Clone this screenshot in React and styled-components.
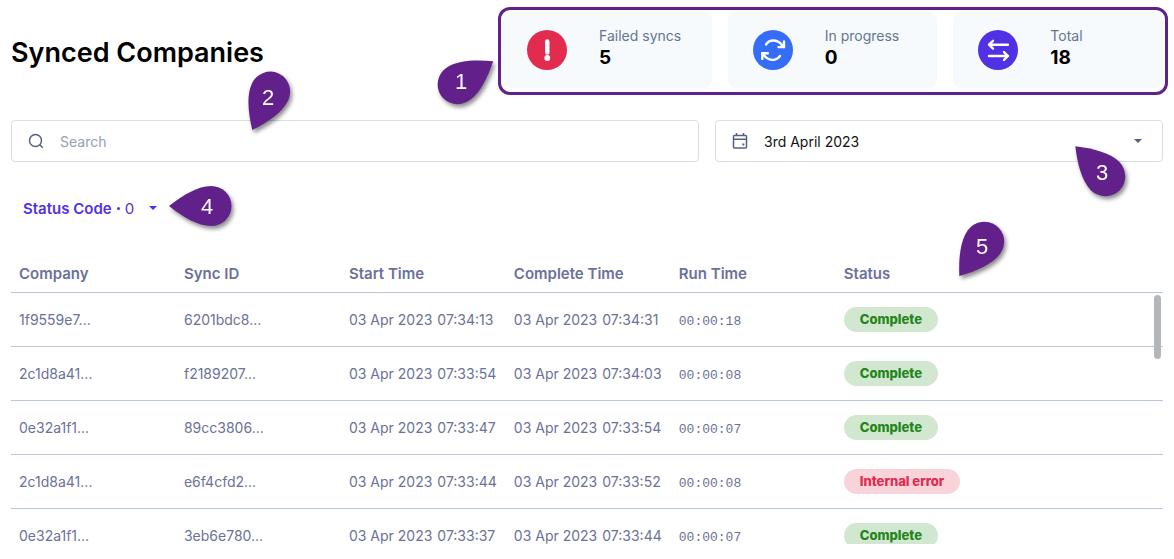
import React from "react";
import styled, { createGlobalStyle } from "styled-components";

const GlobalStyle = createGlobalStyle`
  *, *::before, *::after { box-sizing: border-box; }
  body {
    margin: 0;
    background: #fff;
    font-family: Inter, "Open Sans", sans-serif;
    font-size: 15px;
    color: #6b7199;
  }
  button, input { font: inherit; }
`;

const Page = styled.main`
  display: flex;
  flex-direction: column;
  height: 100vh;
  min-height: 400px;
  padding: 12px 11px 15px;
`;

const Header = styled.header`
  display: flex;
  align-items: center;
  margin-bottom: 32px;
`;

const Title = styled.h1`
  flex: 491 1 0;
  margin: 0;
  padding-top: 6px;
  font-size: 27px;
  line-height: 32px;
  font-weight: 600;
  color: #000;
`;

const Stats = styled.section`
  position: relative;
  flex: 661 1 0;
  display: flex;
  gap: 16px;

  &::after {
    content: "";
    position: absolute;
    inset: -5px -5px -7px -4px;
    border: 3px solid #62218a;
    border-radius: 12px;
    pointer-events: none;
  }
`;

const StatCard = styled.div`
  flex: 1;
  display: flex;
  align-items: center;
  gap: 32px;
  height: 76px;
  padding-left: 25px;
  border-radius: 8px;
  background: #f6fafd;
`;

const StatText = styled.div`
  padding-bottom: 7px;
  line-height: 22px;
  white-space: nowrap;
`;

const StatLabel = styled.div`
  font-size: 14px;
  color: #66758f;
`;

const StatValue = styled.div`
  font-size: 19px;
  font-weight: 700;
  color: #000;
`;

const Controls = styled.div`
  display: grid;
  grid-template-columns: 43fr 28fr;
  gap: 16px;
  margin-bottom: 26px;
`;

const Anchor = styled.div`
  position: relative;
`;

const SearchField = styled.label`
  display: flex;
  align-items: center;
  gap: 16px;
  height: 42px;
  padding: 0 16px;
  border: 1px solid #d5deeb;
  border-radius: 4px;
`;

const SearchInput = styled.input`
  flex: 1;
  min-width: 0;
  padding: 0;
  border: 0;
  outline: 0;
  background: none;
  font-size: 14px;
  color: #111;
  &::placeholder { color: #94a0b8; opacity: 1; }
`;

const DateButton = styled.button`
  display: flex;
  align-items: center;
  gap: 16px;
  width: 100%;
  height: 42px;
  padding: 0 20px 0 16px;
  border: 1px solid #d5deeb;
  border-radius: 4px;
  background: #fff;
  color: #54617f;
  font-size: 14px;
  text-align: left;
  cursor: pointer;
`;

const DateText = styled.span`
  flex: 1;
  color: #111;
`;

const Filters = styled.div`
  position: relative;
  margin-bottom: 26px;
`;

const FilterButton = styled.button`
  display: flex;
  align-items: center;
  height: 40px;
  padding: 0 12px;
  gap: 5px;
  border: 0;
  background: none;
  color: #5130e5;
  cursor: pointer;

  strong { font-weight: 600; }
  svg { margin-left: 10px; }
`;

const Dot = styled.span`
  width: 3px;
  height: 3px;
  border-radius: 50%;
  background: currentColor;
`;

const TableArea = styled.section`
  position: relative;
  flex: 1;
  min-height: 0;
`;

const TableScroll = styled.div`
  height: 100%;
  overflow-y: auto;
  scrollbar-width: none;
`;

const ScrollThumb = styled.div`
  position: absolute;
  top: 41px;
  right: 2px;
  width: 7px;
  height: 64px;
  border-radius: 4px;
  background: #b3b7ba;
`;

const Table = styled.table`
  width: 100%;
  table-layout: fixed;
  border-collapse: separate;
  border-spacing: 0;
`;

const Column = styled.col`
  width: ${(p) => p.$width || "auto"};
`;

const HeadCell = styled.th`
  position: sticky;
  top: 0;
  height: 39px;
  padding: 0 8px;
  border-bottom: 1px solid #b9c6dc;
  background: #fff;
  text-align: left;
  font-size: 15px;
  font-weight: 600;
  white-space: nowrap;
`;

const Cell = styled.td`
  height: 54px;
  padding: 0 8px;
  border-bottom: 1px solid #b9c6dc;
  font-size: 14px;
  white-space: nowrap;
`;

const Stamp = styled.time`
  display: flex;
  gap: 5px;
`;

const Duration = styled.span`
  font-family: "Liberation Mono", monospace;
  font-size: 13px;
`;

const Badge = styled.span`
  display: inline-block;
  padding: 0 16px;
  border-radius: 13px;
  font-size: 13px;
  line-height: 25px;
  font-weight: 800;
  vertical-align: middle;
  background: ${(p) => (p.$error ? "#f9d3da" : "#d2e7cf")};
  color: ${(p) => (p.$error ? "#e22b4e" : "#23851a")};
`;

const PinBox = styled.svg`
  position: absolute;
  z-index: 2;
  top: ${(p) => p.$y - 48}px;
  ${(p) => (p.$right !== undefined ? `right: ${p.$right - 48}px;` : `left: ${p.$x - 48}px;`)}
  width: 96px;
  height: 96px;
  pointer-events: none;
  filter: drop-shadow(2px 3px 2px rgba(0, 0, 0, 0.45));

  text {
    font-family: "Liberation Sans", Arial, sans-serif;
    font-size: 22px;
    fill: #fff;
    text-anchor: middle;
  }
`;

/* Teardrop callout; angle turns its tip, 0 pointing left. */
function Pin({ n, x, y, right, angle }) {
  const rad = (angle * Math.PI) / 180;
  return (
    <PinBox $x={x} $y={y} $right={right} viewBox="-48 -48 96 96">
      <path
        d="M-42 0C-28-11-13-20 0-20A20.500 20 0 0 1 0 20C-13 20-28 11-42 0Z"
        fill="#62218a"
        transform={`rotate(${angle})`}
      />
      <text x={Math.round(-4 * Math.cos(rad))} y={Math.round(8 - 5 * Math.sin(rad))}>{n}</text>
    </PinBox>
  );
}

const Caret = ({ size = 8 }) => (
  <svg width={size} height={size / 2} viewBox="0 0 8 4" fill="currentColor" aria-hidden="true">
    <path d="M0 0h8L4 4z" />
  </svg>
);

const ErrorIcon = () => (
  <svg width="40" height="40" viewBox="0 0 40 40" aria-hidden="true">
    <circle cx="20" cy="20" r="20" fill="#e22b4e" />
    <path d="M20.300 11.500v11" stroke="#fff" strokeWidth="4.400" strokeLinecap="round" />
    <circle cx="20.300" cy="28" r="2.900" fill="#fff" />
  </svg>
);

const ProgressIcon = () => (
  <svg width="40" height="40" viewBox="0 0 40 40" aria-hidden="true">
    <circle cx="20" cy="20" r="20" fill="#356df8" />
    <g fill="none" stroke="#fff" strokeWidth="2.400" strokeLinecap="round" strokeLinejoin="miter">
      <path d="M13 14.500C16.500 9.200 25 8.800 29.500 16M31 11.500v5.600h-5.500" />
      <path d="M27 25.900C23.500 31.200 15 31.600 10.500 24.400M9.300 28.900v-5.600h5.500" />
    </g>
  </svg>
);

const TotalIcon = () => (
  <svg width="40" height="40" viewBox="0 0 40 40" aria-hidden="true">
    <circle cx="20" cy="20" r="20" fill="#5130e5" />
    <g fill="none" stroke="#fff" strokeWidth="2.400" strokeLinecap="round" strokeLinejoin="round">
      <path d="M30 14.700H11M15 10.800l-4 3.900 4 3.900" />
      <path d="M11 26h19M26 22.100l4 3.900-4 3.900" />
    </g>
  </svg>
);

const SearchIcon = () => (
  <svg width="16" height="16" viewBox="0 0 16 16" fill="none" stroke="#54617f" strokeWidth="1.500" aria-hidden="true">
    <circle cx="7.500" cy="7.500" r="6" />
    <path d="M11.800 11.800l3 3" />
  </svg>
);

const CalendarIcon = () => (
  <svg width="16" height="16" viewBox="0 0 16 16" fill="none" stroke="#54617f" strokeWidth="1.500" aria-hidden="true">
    <rect x="1.500" y="2.500" width="13" height="12.500" rx="1" />
    <path d="M1.500 6.200h13M4.500 0v2.500M11.500 0v2.500" />
    <path d="M10.300 11.500h2" strokeWidth="2" />
  </svg>
);

const stats = [
  { label: "Failed syncs", value: 5, Icon: ErrorIcon },
  { label: "In progress", value: 0, Icon: ProgressIcon },
  { label: "Total", value: 18, Icon: TotalIcon },
];

const headings = ["Company", "Sync ID", "Start Time", "Complete Time", "Run Time", "Status"];

const rows = [
  ["1f9559e7...", "6201bdc8...", "07:34:13", "07:34:31", "00:00:18", "Complete"],
  ["2c1d8a41...", "f2189207...", "07:33:54", "07:34:03", "00:00:08", "Complete"],
  ["0e32a1f1...", "89cc3806...", "07:33:47", "07:33:54", "00:00:07", "Complete"],
  ["2c1d8a41...", "e6f4cfd2...", "07:33:44", "07:33:52", "00:00:08", "Internal error"],
  ["0e32a1f1...", "3eb6e780...", "07:33:37", "07:33:44", "00:00:07", "Complete"],
];

const DateTime = ({ time }) => (
  <Stamp>
    <span>03 Apr 2023</span>
    <span>{time}</span>
  </Stamp>
);

export default function App() {
  return (
    <>
      <GlobalStyle />
      <Page>
        <Header>
          <Title>Synced Companies</Title>
          <Stats>
            {stats.map(({ label, value, Icon }) => (
              <StatCard key={label}>
                <Icon />
                <StatText>
                  <StatLabel>{label}</StatLabel>
                  <StatValue>{value}</StatValue>
                </StatText>
              </StatCard>
            ))}
            <Pin n={1} x={-44} y={72} angle={147} />
          </Stats>
        </Header>

        <Controls>
          <Anchor>
            <SearchField>
              <SearchIcon />
              <SearchInput type="search" placeholder="Search" aria-label="Search" />
            </SearchField>
            <Pin n={2} x={259} y={-28} angle={-65} />
          </Anchor>
          <Anchor>
            <DateButton type="button">
              <CalendarIcon />
              <DateText>3rd April 2023</DateText>
              <Caret />
            </DateButton>
            <Pin n={3} right={58} y={56} angle={45} />
          </Anchor>
        </Controls>

        <Filters>
          <FilterButton type="button">
            <strong>Status Code</strong>
            <Dot />
            <span>0</span>
            <Caret />
          </FilterButton>
          <Pin n={4} x={200} y={18} angle={0} />
        </Filters>

        <TableArea>
          <TableScroll>
            <Table>
              <colgroup>
                {headings.map((h, i) => (
                  <Column key={h} $width={i < 5 ? "14.32%" : undefined} />
                ))}
              </colgroup>
              <thead>
                <tr>
                  {headings.map((h) => (
                    <HeadCell key={h} scope="col">{h}</HeadCell>
                  ))}
                </tr>
              </thead>
              <tbody>
                {rows.map(([company, sync, start, end, run, status]) => (
                  <tr key={sync}>
                    <Cell>{company}</Cell>
                    <Cell>{sync}</Cell>
                    <Cell><DateTime time={start} /></Cell>
                    <Cell><DateTime time={end} /></Cell>
                    <Cell><Duration>{run}</Duration></Cell>
                    <Cell><Badge $error={status !== "Complete"}>{status}</Badge></Cell>
                  </tr>
                ))}
              </tbody>
            </Table>
          </TableScroll>
          <ScrollThumb />
          <Pin n={5} x={973} y={-12} angle={-54} />
        </TableArea>
      </Page>
    </>
  );
}
